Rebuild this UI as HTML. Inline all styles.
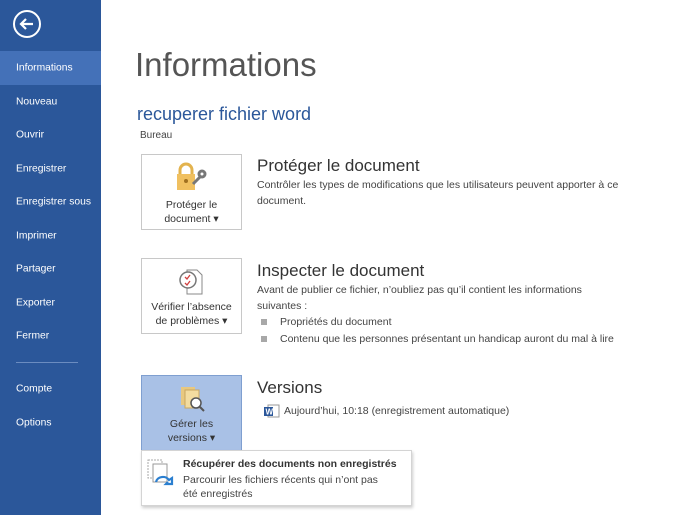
<!DOCTYPE html>
<html><head><style>
*{margin:0;padding:0;box-sizing:border-box}
body{width:700px;height:515px;overflow:hidden;background:#fff;font-family:"Liberation Sans",sans-serif;position:relative;color:#444}
#side{position:absolute;left:0;top:0;width:101px;height:515px;background:#2b579a}
.mi{position:absolute;left:16px;color:#fff;font-size:10.3px;transform:translateY(-50%)}
.sel{position:absolute;left:0;top:51px;width:101px;height:34px;background:#4471b8}
.back{position:absolute;left:13px;top:10px;width:28px;height:28px;border:2px solid #fff;border-radius:50%}
.t{position:absolute;white-space:nowrap}
.btn{position:absolute;left:141px;width:101px;height:76px;border:1px solid #c8c8c8;background:#fff;text-align:center;font-size:10.5px;color:#333;line-height:14px}
.h2{font-size:17px;color:#333}
.p{font-size:10.5px;color:#444;line-height:16px}
.bul{position:absolute;width:6px;height:6px;background:#a8a8a8}
</style></head><body>
<div id="side">
<div class="back"><svg width="24" height="24" viewBox="0 0 24 24" style="position:absolute;left:0;top:0"><path d="M6 12H18M11 7L6 12L11 17" stroke="#fff" stroke-width="2.2" fill="none"/></svg></div>
<div class="sel"></div>
<div class="mi" style="top:68px">Informations</div>
<div class="mi" style="top:102px">Nouveau</div>
<div class="mi" style="top:135px">Ouvrir</div>
<div class="mi" style="top:169px">Enregistrer</div>
<div class="mi" style="top:202px">Enregistrer sous</div>
<div class="mi" style="top:236px">Imprimer</div>
<div class="mi" style="top:269px">Partager</div>
<div class="mi" style="top:303px">Exporter</div>
<div class="mi" style="top:336px">Fermer</div>
<div style="position:absolute;left:16px;top:362px;width:62px;height:1px;background:#6b8cc0"></div>
<div class="mi" style="top:389px">Compte</div>
<div class="mi" style="top:423px">Options</div>
</div>
<div class="t" style="left:135px;top:46px;font-size:33px;color:#555">Informations</div>
<div class="t" style="left:137px;top:104px;font-size:18px;color:#2b579a">recuperer fichier word</div>
<div class="t" style="left:140px;top:130px;font-size:10px;color:#444">Bureau</div>

<div class="btn" style="top:154px"><svg width="34" height="30" viewBox="0 0 34 30" style="margin-top:7px"><path d="M5 12V8a6 6 0 0 1 12 0v4" stroke="#e3b34e" stroke-width="3" fill="none"/><rect x="2" y="12" width="18" height="16" fill="#f0c060"/><circle cx="11" cy="19" r="2" fill="#a07020"/><path d="M18 22l8-8M24 12a3 3 0 1 0 6 0a3 3 0 1 0-6 0" stroke="#777" stroke-width="3" fill="none"/></svg><div style="margin-top:2px">Protéger le<br>document ▾</div></div>
<div class="t h2" style="left:257px;top:156px">Protéger le document</div>
<div class="t p" style="left:257px;top:177px">Contrôler les types de modifications que les utilisateurs peuvent apporter à ce<br>document.</div>

<div class="btn" style="top:258px"><svg width="30" height="30" viewBox="0 0 30 30" style="margin-top:7px"><path d="M10 4h10l5 5v19H10z" fill="#fff" stroke="#888"/><circle cx="11" cy="14" r="8" fill="#fff" stroke="#777" stroke-width="1.5"/><path d="M8 11l2 2 3-4M8 17l2 2 3-4" stroke="#d04040" stroke-width="1.3" fill="none"/></svg><div style="margin-top:0px">Vérifier l’absence<br>de problèmes ▾</div></div>
<div class="t h2" style="left:257px;top:261px">Inspecter le document</div>
<div class="t p" style="left:257px;top:282px">Avant de publier ce fichier, n’oubliez pas qu’il contient les informations<br>suivantes :</div>
<div class="bul" style="left:261px;top:319px"></div><div class="t p" style="left:280px;top:314px">Propriétés du document</div>
<div class="bul" style="left:261px;top:336px"></div><div class="t p" style="left:280px;top:331px">Contenu que les personnes présentant un handicap auront du mal à lire</div>

<div class="btn" style="top:375px;background:#a9c1e6;border-color:#7f9fd0"><svg width="30" height="30" viewBox="0 0 30 30" style="margin-top:7px"><rect x="4" y="4" width="14" height="18" fill="#e8c880"/><rect x="8" y="7" width="14" height="18" fill="#f3dca0" stroke="#c9a660"/><circle cx="19" cy="20" r="5" fill="#fff" stroke="#555" stroke-width="1.5"/><path d="M23 24l4 4" stroke="#555" stroke-width="2"/></svg><div style="margin-top:0px">Gérer les<br>versions ▾</div></div>
<div class="t h2" style="left:257px;top:378px">Versions</div>
<svg style="position:absolute;left:264px;top:404px" width="16" height="14"><rect x="4" y="1" width="11" height="12" fill="#fff" stroke="#999"/><rect x="0" y="3" width="9" height="9" fill="#2b579a"/><text x="1.5" y="10.5" font-size="8" fill="#fff" font-family="Liberation Sans" font-weight="bold">W</text></svg>
<div class="t p" style="left:284px;top:403px">Aujourd’hui, 10:18 (enregistrement automatique)</div>

<div style="position:absolute;left:141px;top:450px;width:271px;height:56px;background:#fff;border:1px solid #d4d4d4;box-shadow:1px 2px 3px rgba(0,0,0,.2)"></div>
<svg style="position:absolute;left:146px;top:458px" width="30" height="30" viewBox="0 0 30 30"><rect x="2" y="2" width="14" height="18" fill="#fff" stroke="#aaa" stroke-dasharray="2 1"/><rect x="7" y="6" width="14" height="18" fill="#fff" stroke="#999"/><path d="M10 24a7 6 0 0 1 13-2l3-2v6h-6l2-2" stroke="#2b7fd0" stroke-width="2.2" fill="none"/></svg>
<div class="t" style="left:183px;top:458px;font-size:10.5px;font-weight:bold;color:#333">Récupérer des documents non enregistrés</div>
<div class="t p" style="left:183px;top:473px;line-height:14px">Parcourir les fichiers récents qui n’ont pas<br>été enregistrés</div>
</body></html>
